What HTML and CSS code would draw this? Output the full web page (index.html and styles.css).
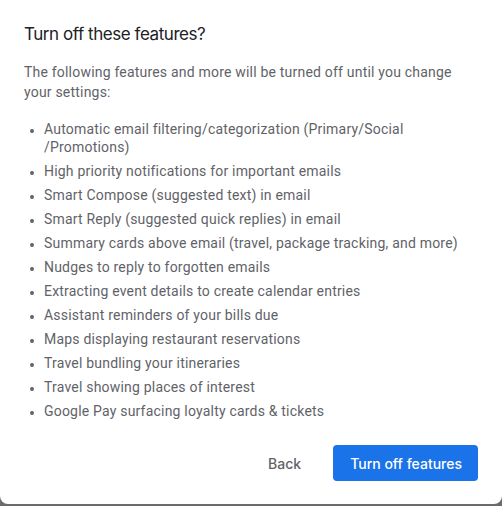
FILE: index.html
```html
<!DOCTYPE html>
<html>
<head>
<meta charset="utf-8">
<link rel="stylesheet" href="styles.css">
</head>
<body>
<div class="dialog">
  <h1 class="title">Turn off these features?</h1>
  <p class="intro">The following features and more will be turned off until you change your settings:</p>
  <ul class="features">
    <li>Automatic email filtering/categorization (Primary/Social /Promotions)</li>
    <li>High priority notifications for important emails</li>
    <li>Smart Compose (suggested text) in email</li>
    <li>Smart Reply (suggested quick replies) in email</li>
    <li>Summary cards above email (travel, package tracking, and more)</li>
    <li>Nudges to reply to forgotten emails</li>
    <li>Extracting event details to create calendar entries</li>
    <li>Assistant reminders of your bills due</li>
    <li>Maps displaying restaurant reservations</li>
    <li>Travel bundling your itineraries</li>
    <li>Travel showing places of interest</li>
    <li>Google Pay surfacing loyalty cards &amp; tickets</li>
  </ul>
  <div class="actions">
    <button class="btn btn-text">Back</button>
    <button class="btn btn-primary">Turn off features</button>
  </div>
</div>
</body>
</html>
```
FILE: styles.css
```css
html {
  background: #6b6b6b;
}
body {
  margin: 0;
  font-family: Roboto, "Liberation Sans", sans-serif;
}
.dialog {
  background: #fff;
  height: 504px;
  box-sizing: border-box;
  border-radius: 0 0 8px 8px;
  padding: 22px 24px 0 24px;
  display: flex;
  flex-direction: column;
}
.title {
  margin: 0;
  font-family: Inter, "Open Sans", sans-serif;
  font-weight: 400;
  font-size: 17px;
  letter-spacing: -0.45px;
  line-height: 24px;
  color: #202124;
}
.intro {
  margin: 16px 0 0 0;
  font-size: 14px;
  line-height: 20px;
  color: #5f6368;
  letter-spacing: 0.2px;
}
.features {
  margin: 18px 0 0 0;
  padding: 0 0 0 20px;
  font-size: 14px;
  line-height: 18px;
  color: #5f6368;
  letter-spacing: 0.2px;
}
.features li {
  margin-bottom: 6px;
}
.features li::marker {
  font-size: 12px;
}
.actions {
  display: flex;
  justify-content: flex-end;
  gap: 16px;
  margin-top: 19px;
  padding-right: 0;
}
.btn {
  font-family: Inter, "Open Sans", sans-serif;
  font-size: 14px;
  font-weight: 500;
  height: 36px;
  border: none;
  border-radius: 4px;
  padding: 0 16px;
  cursor: pointer;
}
.btn-text {
  background: transparent;
  color: #5f6368;
}
.btn-primary {
  background: #1a73e8;
  color: #fff;
  padding: 0 16px 0 17px;
}
```
